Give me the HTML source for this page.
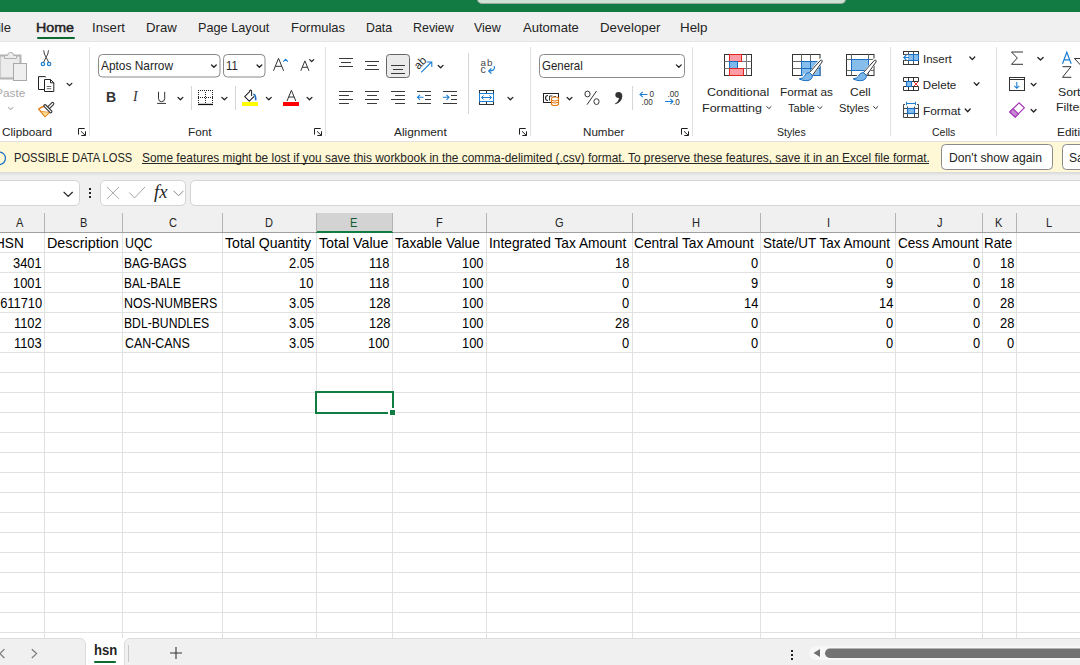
<!DOCTYPE html>
<html><head><meta charset="utf-8">
<style>
html,body{margin:0;padding:0;}
body{width:1080px;height:665px;overflow:hidden;position:relative;background:#fff;font-family:'Liberation Sans',sans-serif;}
.a{position:absolute;}
.t{position:absolute;white-space:nowrap;transform-origin:0 0;}
svg{position:absolute;overflow:visible;}
</style></head><body>
<!-- title bar -->
<div class="a" style="left:0;top:0;width:1080px;height:12px;background:#117b43"></div>
<div class="a" style="left:477px;top:-12px;width:367px;height:15px;background:#d0e2d6;border-bottom:1px solid #9aa89e;border-left:1px solid #9aa89e;border-right:1px solid #9aa89e;border-radius:0 0 5px 5px"></div>
<!-- tab bar -->
<div class="a" style="left:0;top:12px;width:1080px;height:29px;background:#f0f0f0"></div>
<div class="a" style="left:37px;top:37px;width:38px;height:2px;background:#0e6b30;border-radius:1px"></div>
<!-- ribbon -->
<div class="a" style="left:0;top:41px;width:1080px;height:100px;background:#fff;border-top:1px solid #e6e6e6"></div>
<div class="a" style="left:89px;top:47px;width:1px;height:89px;background:#e0e0e0"></div>
<div class="a" style="left:325px;top:47px;width:1px;height:89px;background:#e0e0e0"></div>
<div class="a" style="left:530px;top:47px;width:1px;height:89px;background:#e0e0e0"></div>
<div class="a" style="left:692px;top:47px;width:1px;height:89px;background:#e0e0e0"></div>
<div class="a" style="left:890px;top:47px;width:1px;height:89px;background:#e0e0e0"></div>
<div class="a" style="left:996px;top:47px;width:1px;height:89px;background:#e0e0e0"></div>
<!-- notification -->
<div class="a" style="left:0;top:141px;width:1080px;height:1px;background:#e1e1e1"></div>
<div class="a" style="left:0;top:142px;width:1080px;height:30px;background:#fff8d6"></div>
<!-- formula bar -->
<div class="a" style="left:0;top:172px;width:1080px;height:466px;background:#f0f0f0"></div>
<div class="a" style="left:0;top:172px;width:1080px;height:4px;background:linear-gradient(#d8d8d8,#f0f0f0)"></div>
<div class="a" style="left:-10px;top:180px;width:88px;height:24px;background:#fff;border:1px solid #d4d4d4;border-radius:5px"></div>
<div class="a" style="left:100px;top:180px;width:84px;height:24px;background:#fff;border:1px solid #d4d4d4;border-radius:5px"></div>
<div class="a" style="left:190px;top:180px;width:900px;height:24px;background:#fff;border:1px solid #d4d4d4;border-radius:5px"></div>
<!-- column header -->
<div class="a" style="left:316px;top:213px;width:76px;height:19px;background:#d3d3d3"></div>
<div class="a" style="left:0;top:232px;width:1080px;height:1px;background:#a0a0a0"></div>
<div class="a" style="left:316px;top:231px;width:77px;height:2px;background:#107c41"></div>
<!-- grid -->
<div class="a" style="left:0;top:233px;width:1080px;height:405px;background:#fff"></div>
<svg width="1080" height="665" style="left:0;top:0" shape-rendering="crispEdges">
<g id="vl"></g>
</svg>
<div class="a" style="left:44px;top:213px;width:1px;height:19px;background:#b4b4b4"></div>
<div class="a" style="left:44px;top:233px;width:1px;height:405px;background:#e1e1e1"></div>
<div class="a" style="left:122px;top:213px;width:1px;height:19px;background:#b4b4b4"></div>
<div class="a" style="left:122px;top:233px;width:1px;height:405px;background:#e1e1e1"></div>
<div class="a" style="left:222px;top:213px;width:1px;height:19px;background:#b4b4b4"></div>
<div class="a" style="left:222px;top:233px;width:1px;height:405px;background:#e1e1e1"></div>
<div class="a" style="left:316px;top:213px;width:1px;height:19px;background:#b4b4b4"></div>
<div class="a" style="left:316px;top:233px;width:1px;height:405px;background:#e1e1e1"></div>
<div class="a" style="left:392px;top:213px;width:1px;height:19px;background:#b4b4b4"></div>
<div class="a" style="left:392px;top:233px;width:1px;height:405px;background:#e1e1e1"></div>
<div class="a" style="left:486px;top:213px;width:1px;height:19px;background:#b4b4b4"></div>
<div class="a" style="left:486px;top:233px;width:1px;height:405px;background:#e1e1e1"></div>
<div class="a" style="left:632px;top:213px;width:1px;height:19px;background:#b4b4b4"></div>
<div class="a" style="left:632px;top:233px;width:1px;height:405px;background:#e1e1e1"></div>
<div class="a" style="left:760px;top:213px;width:1px;height:19px;background:#b4b4b4"></div>
<div class="a" style="left:760px;top:233px;width:1px;height:405px;background:#e1e1e1"></div>
<div class="a" style="left:895px;top:213px;width:1px;height:19px;background:#b4b4b4"></div>
<div class="a" style="left:895px;top:233px;width:1px;height:405px;background:#e1e1e1"></div>
<div class="a" style="left:982px;top:213px;width:1px;height:19px;background:#b4b4b4"></div>
<div class="a" style="left:982px;top:233px;width:1px;height:405px;background:#e1e1e1"></div>
<div class="a" style="left:1016px;top:213px;width:1px;height:19px;background:#b4b4b4"></div>
<div class="a" style="left:1016px;top:233px;width:1px;height:405px;background:#e1e1e1"></div>
<div class="a" style="left:0;top:252px;width:1080px;height:1px;background:#e1e1e1"></div>
<div class="a" style="left:0;top:272px;width:1080px;height:1px;background:#e1e1e1"></div>
<div class="a" style="left:0;top:292px;width:1080px;height:1px;background:#e1e1e1"></div>
<div class="a" style="left:0;top:312px;width:1080px;height:1px;background:#e1e1e1"></div>
<div class="a" style="left:0;top:332px;width:1080px;height:1px;background:#e1e1e1"></div>
<div class="a" style="left:0;top:352px;width:1080px;height:1px;background:#e1e1e1"></div>
<div class="a" style="left:0;top:372px;width:1080px;height:1px;background:#e1e1e1"></div>
<div class="a" style="left:0;top:392px;width:1080px;height:1px;background:#e1e1e1"></div>
<div class="a" style="left:0;top:412px;width:1080px;height:1px;background:#e1e1e1"></div>
<div class="a" style="left:0;top:432px;width:1080px;height:1px;background:#e1e1e1"></div>
<div class="a" style="left:0;top:452px;width:1080px;height:1px;background:#e1e1e1"></div>
<div class="a" style="left:0;top:472px;width:1080px;height:1px;background:#e1e1e1"></div>
<div class="a" style="left:0;top:492px;width:1080px;height:1px;background:#e1e1e1"></div>
<div class="a" style="left:0;top:512px;width:1080px;height:1px;background:#e1e1e1"></div>
<div class="a" style="left:0;top:532px;width:1080px;height:1px;background:#e1e1e1"></div>
<div class="a" style="left:0;top:552px;width:1080px;height:1px;background:#e1e1e1"></div>
<div class="a" style="left:0;top:572px;width:1080px;height:1px;background:#e1e1e1"></div>
<div class="a" style="left:0;top:592px;width:1080px;height:1px;background:#e1e1e1"></div>
<div class="a" style="left:0;top:612px;width:1080px;height:1px;background:#e1e1e1"></div>
<div class="a" style="left:0;top:632px;width:1080px;height:1px;background:#e1e1e1"></div>
<!-- selection -->
<div class="a" style="left:315px;top:391px;width:75px;height:19px;border:2px solid #107c41"></div>
<div class="a" style="left:388px;top:408px;width:8px;height:8px;background:#fff"></div>
<div class="a" style="left:390px;top:410px;width:5px;height:5px;background:#107c41"></div>
<!-- sheet tabs -->
<div class="a" style="left:0;top:638px;width:1080px;height:27px;background:#fff"></div>
<div class="a" style="left:-10px;top:638px;width:94px;height:40px;background:#f0f0f0;border:1px solid #dcdcdc;border-radius:0 6px 0 0"></div>
<div class="a" style="left:124px;top:638px;width:1000px;height:40px;background:#f0f0f0;border:1px solid #dcdcdc;border-radius:6px 0 0 0"></div>
<div class="a" style="left:94px;top:661px;width:22px;height:2px;background:#0e6b30;border-radius:1px"></div>
<div class="a" style="left:128px;top:645px;width:1px;height:17px;background:#c8c8c8"></div>
<svg width="1080" height="665" style="left:0;top:0" viewBox="0 0 1080 665">
<!-- ===== Clipboard ===== -->
<!-- paste board -->
<rect x="-0.5" y="55.5" width="21" height="23" fill="#e6e6e6" stroke="#b4b4b4" stroke-width="2"/>
<rect x="1.5" y="57.5" width="17" height="19" fill="#ececec" stroke="none"/>
<path d="M4.5 58.5 V55.5 H7.6 A3.1 3.1 0 0 1 13.8 55.5 H16.5 V58.5 Z" fill="#ececec" stroke="#b0b0b0" stroke-width="1"/>
<rect x="13.5" y="63.5" width="13" height="17" fill="#efefef" stroke="#a9a9a9" stroke-width="1"/>
<path d="M8.35 107.35 L10.70 109.50 L13.05 107.35" fill="none" stroke="#b9b9b9" stroke-width="1.1" stroke-linecap="round" stroke-linejoin="round"/>
<!-- scissors -->
<path d="M43.7 50.3 Q43.9 54.3 46.1 57.2 L43.4 62.6 M48.5 50.3 Q48.3 54.3 46.1 57.2 L48.8 62.6" fill="none" stroke="#444" stroke-width="1"/>
<circle cx="42.9" cy="64" r="1.7" fill="none" stroke="#1d7fd3" stroke-width="1.2"/>
<circle cx="49.1" cy="64" r="1.7" fill="none" stroke="#1d7fd3" stroke-width="1.2"/>
<!-- copy -->
<path d="M44.3 89.5 H38.5 V76.6 H45.3 L45.8 77.4" fill="none" stroke="#222" stroke-width="1"/>
<path d="M44.5 79.5 H50.5 L53.8 82.8 V91.5 H44.5 Z" fill="#fff" stroke="#222" stroke-width="1" stroke-linejoin="round"/>
<path d="M50.5 79.5 V82.8 H53.8" fill="none" stroke="#222" stroke-width="1"/>
<path d="M46.8 86.5 H51.2 M46.8 88.7 H51.2" stroke="#555" stroke-width="0.9"/>
<path d="M67.15 83.35 L69.50 85.60 L71.85 83.35" fill="none" stroke="#222" stroke-width="1.3" stroke-linecap="round" stroke-linejoin="round"/>
<!-- format painter -->
<path d="M38.6 109 Q42 106.6 45.3 106 L50.6 111.3 L45 116.6 Z" fill="#fff" stroke="#e07a12" stroke-width="1.3" stroke-linejoin="round"/>
<path d="M41.5 111.3 L49 112.6 L45 116 Z" fill="#fbe08e"/>
<path d="M41.2 111.5 L49.5 112.3" stroke="#e88a2a" stroke-width="0.9"/>
<path d="M48.5 107.8 L52.6 103.7" stroke="#333" stroke-width="3.6" stroke-linecap="round"/>
<path d="M48.5 107.8 L52.6 103.7" stroke="#fff" stroke-width="1.4" stroke-linecap="round"/>
<path d="M45 105.8 L50.8 111.6" stroke="#333" stroke-width="3.4" stroke-linecap="round"/>
<path d="M45 105.8 L50.8 111.6" stroke="#fff" stroke-width="1.2" stroke-linecap="round"/>
<!-- ===== Font ===== -->
<rect x="98.5" y="54.5" width="121.5" height="22.5" rx="4" fill="#fff" stroke="#8a8a8a" stroke-width="1"/>
<path d="M211.55 64.95 L213.90 67.30 L216.25 64.95" fill="none" stroke="#222" stroke-width="1.3" stroke-linecap="round" stroke-linejoin="round"/>
<rect x="223.5" y="54.5" width="41.5" height="22.5" rx="4" fill="#fff" stroke="#8a8a8a" stroke-width="1"/>
<path d="M257.05 64.95 L259.40 67.30 L261.75 64.95" fill="none" stroke="#222" stroke-width="1.3" stroke-linecap="round" stroke-linejoin="round"/>
<!-- grow / shrink -->
<path d="M273.5 70.8 L278.5 58.3 L283.6 70.8 M275.4 66.3 H281.7" fill="none" stroke="#333" stroke-width="1"/>
<path d="M283.3 61.6 L285.6 59.3 L287.9 61.6" fill="none" stroke="#1d7fd3" stroke-width="1.1"/>
<path d="M300.8 70.8 L304.9 60.9 L309 70.8 M302.4 67.3 H307.4" fill="none" stroke="#333" stroke-width="1"/>
<path d="M309.75 59.65 L311.70 61.60 L313.65 59.65" fill="none" stroke="#222" stroke-width="1.3" stroke-linecap="round" stroke-linejoin="round"/>
<!-- U -->
<path d="M158.5 91.8 V98.4 Q158.5 101.7 161.6 101.7 Q164.7 101.7 164.7 98.4 V91.8" fill="none" stroke="#333" stroke-width="1"/>
<path d="M157.1 103.4 H166" stroke="#333" stroke-width="1"/>
<path d="M177.95 97.35 L180.40 99.80 L182.85 97.35" fill="none" stroke="#222" stroke-width="1.3" stroke-linecap="round" stroke-linejoin="round"/>
<rect x="191" y="86" width="1" height="24" fill="#d6d6d6"/>
<!-- borders -->
<g fill="#222"><rect x="198" y="90" width="1" height="1"/><rect x="198" y="97" width="1" height="1"/><rect x="200" y="90" width="1" height="1"/><rect x="200" y="97" width="1" height="1"/><rect x="202" y="90" width="1" height="1"/><rect x="202" y="97" width="1" height="1"/><rect x="204" y="90" width="1" height="1"/><rect x="204" y="97" width="1" height="1"/><rect x="206" y="90" width="1" height="1"/><rect x="206" y="97" width="1" height="1"/><rect x="208" y="90" width="1" height="1"/><rect x="208" y="97" width="1" height="1"/><rect x="210" y="90" width="1" height="1"/><rect x="210" y="97" width="1" height="1"/><rect x="212" y="90" width="1" height="1"/><rect x="212" y="97" width="1" height="1"/><rect x="198" y="92" width="1" height="1"/><rect x="198" y="94" width="1" height="1"/><rect x="198" y="96" width="1" height="1"/><rect x="198" y="98" width="1" height="1"/><rect x="198" y="100" width="1" height="1"/><rect x="198" y="102" width="1" height="1"/><rect x="205" y="92" width="1" height="1"/><rect x="205" y="94" width="1" height="1"/><rect x="205" y="96" width="1" height="1"/><rect x="205" y="98" width="1" height="1"/><rect x="205" y="100" width="1" height="1"/><rect x="205" y="102" width="1" height="1"/><rect x="212" y="92" width="1" height="1"/><rect x="212" y="94" width="1" height="1"/><rect x="212" y="96" width="1" height="1"/><rect x="212" y="98" width="1" height="1"/><rect x="212" y="100" width="1" height="1"/><rect x="212" y="102" width="1" height="1"/><rect x="205" y="98" width="1" height="1"/><rect x="205" y="96" width="1" height="1"/><rect x="204" y="97" width="1" height="1"/><rect x="206" y="97" width="1" height="1"/></g>
<rect x="198" y="103.8" width="15" height="1.3" fill="#111"/>
<path d="M221.85 97.35 L224.40 99.80 L226.95 97.35" fill="none" stroke="#222" stroke-width="1.3" stroke-linecap="round" stroke-linejoin="round"/>
<rect x="235" y="86" width="1" height="24" fill="#d6d6d6"/>
<!-- fill color -->
<path d="M251.6 96 V91.2 Q251.6 90.1 250.6 90.1 Q249.6 90.1 249.6 91.2 V91.7 L244.7 96.6 L249.3 101.1 L254.2 96.3" fill="#fff" stroke="#222" stroke-width="1.05" stroke-linejoin="round"/>
<path d="M253.2 94.3 Q255.9 94.3 255.7 100.4" fill="none" stroke="#1a6fc4" stroke-width="1.6"/>
<rect x="242" y="102" width="16" height="4" fill="#ffff00"/>
<path d="M266.35 97.35 L268.80 99.80 L271.25 97.35" fill="none" stroke="#222" stroke-width="1.3" stroke-linecap="round" stroke-linejoin="round"/>
<!-- font color -->
<path d="M287 101 L291.4 90.3 L295.8 101 M288.7 97 H294.1" fill="none" stroke="#333" stroke-width="1"/>
<rect x="283" y="102" width="16" height="4" fill="#ff0000"/>
<path d="M307.05 97.35 L309.50 99.80 L311.95 97.35" fill="none" stroke="#222" stroke-width="1.3" stroke-linecap="round" stroke-linejoin="round"/>
<!-- launchers -->
<g fill="none" stroke="#1e1e1e" stroke-width="1"><path transform="translate(0,0)" d="M78.5 134.6 V128.5 H84.7 M81 131.3 L85.3 135.4 M85.5 131.3 V135.5 H81.3"/><path transform="translate(236,0)" d="M78.5 134.6 V128.5 H84.7 M81 131.3 L85.3 135.4 M85.5 131.3 V135.5 H81.3"/><path transform="translate(441,0)" d="M78.5 134.6 V128.5 H84.7 M81 131.3 L85.3 135.4 M85.5 131.3 V135.5 H81.3"/><path transform="translate(603,0)" d="M78.5 134.6 V128.5 H84.7 M81 131.3 L85.3 135.4 M85.5 131.3 V135.5 H81.3"/></g>
<!-- ===== Alignment ===== -->
<g fill="#3a3a3a">
<rect x="339" y="58" width="14" height="1"/><rect x="341" y="62" width="10" height="1"/><rect x="339" y="66" width="14" height="1"/>
<rect x="365" y="61" width="14" height="1"/><rect x="367" y="65" width="10" height="1"/><rect x="365" y="69" width="14" height="1"/>
</g>
<rect x="386.5" y="54.5" width="23" height="23" rx="3" fill="#ebebeb" stroke="#666" stroke-width="1"/>
<g fill="#3a3a3a">
<rect x="391" y="65" width="14" height="1"/><rect x="393" y="69" width="10" height="1"/><rect x="391" y="73" width="14" height="1"/>
<!-- row2 -->
<rect x="339" y="91" width="14" height="1"/><rect x="339" y="95" width="10" height="1"/><rect x="339" y="99" width="14" height="1"/><rect x="339" y="103" width="10" height="1"/>
<rect x="365" y="91" width="14" height="1"/><rect x="367" y="95" width="10" height="1"/><rect x="365" y="99" width="14" height="1"/><rect x="367" y="103" width="10" height="1"/>
<rect x="391" y="91" width="14" height="1"/><rect x="395" y="95" width="10" height="1"/><rect x="391" y="99" width="14" height="1"/><rect x="395" y="103" width="10" height="1"/>
<rect x="417" y="91" width="14" height="1"/><rect x="425" y="95" width="6" height="1"/><rect x="425" y="99" width="6" height="1"/><rect x="417" y="103" width="14" height="1"/>
<rect x="443" y="91" width="14" height="1"/><rect x="451" y="95" width="6" height="1"/><rect x="451" y="99" width="6" height="1"/><rect x="443" y="103" width="14" height="1"/>
</g>
<path d="M423.5 97.3 H417.5 M420 94.8 L417.5 97.3 L420 99.8" fill="none" stroke="#1d7fd3" stroke-width="1.1"/>
<path d="M443 97.3 H449 M446.5 94.8 L449 97.3 L446.5 99.8" fill="none" stroke="#1d7fd3" stroke-width="1.1"/>
<!-- orientation -->
<text x="0" y="0" transform="translate(418.4,70) rotate(-45)" font-family="Liberation Sans" font-size="11.2" fill="#2a2a2a">ab</text>
<path d="M421.2 72.3 L431.5 62 M426.8 62 H431.8 V67" fill="none" stroke="#1d7fd3" stroke-width="1.1"/>
<path d="M438.15 65.35 L440.60 67.80 L443.05 65.35" fill="none" stroke="#222" stroke-width="1.3" stroke-linecap="round" stroke-linejoin="round"/>
<rect x="468" y="53" width="1" height="61" fill="#d6d6d6"/>
<!-- wrap text -->
<text x="480.6" y="65.6" font-family="Liberation Sans" font-size="9.8" fill="#444" letter-spacing="0.9">ab</text>
<text x="480.6" y="73" font-family="Liberation Sans" font-size="10.6" fill="#444">c</text>
<path d="M494.2 66.2 Q495.8 71 488.9 71 M491.4 68.4 L488.7 71 L491.4 73.6" fill="none" stroke="#1d7fd3" stroke-width="1.25"/>
<!-- merge -->
<rect x="479.5" y="90.5" width="14" height="14" fill="#fff" stroke="#333" stroke-width="1"/>
<rect x="479.5" y="93.5" width="14" height="8" fill="#fff" stroke="#1d7fd3" stroke-width="1"/>
<path d="M486.5 90.5 V93 M486.5 102 V104.5" stroke="#333" stroke-width="1"/>
<path d="M481.5 97.5 H491.5 M483.5 95.5 L481.5 97.5 L483.5 99.5 M489.5 95.5 L491.5 97.5 L489.5 99.5" fill="none" stroke="#1d7fd3" stroke-width="1"/>
<path d="M507.95 97.35 L510.40 99.80 L512.85 97.35" fill="none" stroke="#222" stroke-width="1.3" stroke-linecap="round" stroke-linejoin="round"/>

<!-- ===== Number ===== -->
<rect x="539.5" y="54.5" width="145" height="23" rx="4" fill="#fff" stroke="#8a8a8a" stroke-width="1"/>
<path d="M676.35 64.85 L678.80 67.30 L681.25 64.85" fill="none" stroke="#222" stroke-width="1.3" stroke-linecap="round" stroke-linejoin="round"/>
<!-- accounting -->
<rect x="543.5" y="93.5" width="15" height="9" fill="#fff" stroke="#222" stroke-width="1"/>
<path d="M548 95.5 Q545.5 95.5 545.5 98 Q545.5 100.5 548 100.5" fill="none" stroke="#222" stroke-width="1.1"/>
<path d="M549.5 100.5 V96 H552.5 M553.5 96.5 H556" fill="none" stroke="#222" stroke-width="0.9"/>
<path d="M551.5 98.5 Q551.5 97 555 97 Q558.5 97 558.5 98.5 V104 Q558.5 105.5 555 105.5 Q551.5 105.5 551.5 104 Z" fill="#fff" stroke="#e07a12" stroke-width="1.2"/>
<path d="M551.5 100.3 Q555 101.8 558.5 100.3 M551.5 102.3 Q555 103.8 558.5 102.3" fill="none" stroke="#e07a12" stroke-width="1"/>
<path d="M567.05 97.35 L569.50 99.80 L571.95 97.35" fill="none" stroke="#222" stroke-width="1.3" stroke-linecap="round" stroke-linejoin="round"/>
<!-- percent -->
<path d="M596.5 91 L587 104.7" stroke="#333" stroke-width="1"/>
<ellipse cx="587.5" cy="94" rx="2.6" ry="2.9" fill="none" stroke="#333" stroke-width="1"/>
<ellipse cx="596.5" cy="101.6" rx="2.6" ry="2.9" fill="none" stroke="#333" stroke-width="1"/>
<!-- comma -->
<path d="M618.5 92 Q622.5 92 622.3 96.5 Q622 102 615.5 104.3 L615 103.5 Q618.5 101.5 619 98 Q615.3 98 615.3 95 Q615.3 92 618.5 92 Z" fill="#333"/>
<rect x="632" y="86" width="1" height="24" fill="#d6d6d6"/>
<!-- inc decimal -->
<path d="M647.5 94.5 H640 M642.7 91.8 L640 94.5 L642.7 97.2" fill="none" stroke="#1d7fd3" stroke-width="1.1"/>
<text x="649.5" y="96.8" font-family="Liberation Sans" font-size="8.2" fill="#333">0</text>
<text x="641.5" y="104.8" font-family="Liberation Sans" font-size="8.2" fill="#333">.00</text>
<!-- dec decimal -->
<text x="667.5" y="96.8" font-family="Liberation Sans" font-size="8.2" fill="#333">.00</text>
<path d="M665 101.5 H673 M670.3 98.8 L673 101.5 L670.3 104.2" fill="none" stroke="#1d7fd3" stroke-width="1.1"/>
<text x="673" y="104.8" font-family="Liberation Sans" font-size="8.2" fill="#333">.0</text>

<!-- ===== Styles ===== -->
<!-- conditional formatting -->
<rect x="724.5" y="54.5" width="27" height="21" fill="#fff" stroke="#333" stroke-width="1"/>
<path d="M724.5 61.5 H751.5 M724.5 68.5 H751.5 M729.5 54.5 V75.5 M746.5 54.5 V75.5" stroke="#777" stroke-width="1"/>
<rect x="729.5" y="54.5" width="12" height="7" fill="#ff9ba4" stroke="#e0261f" stroke-width="1"/>
<rect x="729.5" y="61.5" width="8" height="7" fill="#7cb9ea" stroke="#1a6fc4" stroke-width="1"/>
<rect x="729.5" y="68.5" width="14" height="7" fill="#ff9ba4" stroke="#e0261f" stroke-width="1"/>
<!-- format as table -->
<rect x="792.5" y="54.5" width="27.5" height="21" fill="#fff" stroke="#333" stroke-width="1"/>
<path d="M792.5 61.5 H820 M792.5 68.5 H820 M801.5 54.5 V75.5 M810.5 54.5 V75.5" stroke="#666" stroke-width="1"/>
<rect x="801.5" y="61.5" width="18.5" height="14" fill="#86bdeb" stroke="#1a6fc4" stroke-width="1"/>
<path d="M801.5 68.5 H820 M810.5 61.5 V75.5" stroke="#1a6fc4" stroke-width="1"/>
<g transform="translate(0,0)">
<path d="M810.8 74.2 L821 61" stroke="#fff" stroke-width="5" stroke-linecap="round"/>
<path d="M806.5 77.5 m-4 0 a4 4 0 1 0 8 0 a4 4 0 1 0 -8 0" fill="#fff"/>
<path d="M809.4 72.6 L820.2 60.6 Q822.6 59.2 822.1 61.9 L812.4 75.5 Z" fill="#fff" stroke="#333" stroke-width="1" stroke-linejoin="round"/>
<path d="M809.4 72.6 L812.4 75.5 Q812.3 80.4 806.6 80.7 Q802.2 80.8 799.2 78.9 Q803.4 78.4 804.5 76.1 Q805.9 72.4 809.4 72.6 Z" fill="#7cb9ea" stroke="#1a6fc4" stroke-width="1" stroke-linejoin="round"/>
</g>
<!-- cell styles -->
<rect x="846.5" y="54.5" width="27.5" height="21" fill="#fff" stroke="#333" stroke-width="1"/>
<path d="M846.5 59.5 H874 M846.5 70.5 H874 M851.5 54.5 V75.5 M868.5 54.5 V75.5" stroke="#666" stroke-width="1"/>
<rect x="851.5" y="59.5" width="17" height="11" fill="#86bdeb" stroke="#1a6fc4" stroke-width="1"/>
<g transform="translate(54,0)">
<path d="M810.8 74.2 L821 61" stroke="#fff" stroke-width="5" stroke-linecap="round"/>
<path d="M806.5 77.5 m-4 0 a4 4 0 1 0 8 0 a4 4 0 1 0 -8 0" fill="#fff"/>
<path d="M809.4 72.6 L820.2 60.6 Q822.6 59.2 822.1 61.9 L812.4 75.5 Z" fill="#fff" stroke="#333" stroke-width="1" stroke-linejoin="round"/>
<path d="M809.4 72.6 L812.4 75.5 Q812.3 80.4 806.6 80.7 Q802.2 80.8 799.2 78.9 Q803.4 78.4 804.5 76.1 Q805.9 72.4 809.4 72.6 Z" fill="#7cb9ea" stroke="#1a6fc4" stroke-width="1" stroke-linejoin="round"/>
</g>
<path d="M766.5 106.3 L768.9 108.7 L771.3 106.3 M817.5 106.3 L819.9 108.7 L822.3 106.3 M873.3 106.3 L875.7 108.7 L878.1 106.3" fill="none" stroke="#333" stroke-width="1"/>

<!-- ===== Cells ===== -->
<!-- insert -->
<rect x="903.5" y="51.5" width="15" height="13" fill="#fff" stroke="#333" stroke-width="1"/>
<path d="M903.5 54.5 H918.5 M903.5 60.5 H918.5 M908.5 51.5 V64.5 M913.5 51.5 V64.5" stroke="#555" stroke-width="1"/>
<rect x="908.5" y="54.5" width="10" height="6" fill="#86bdeb" stroke="#1a6fc4" stroke-width="1"/>
<path d="M913.5 54.5 V60.5" stroke="#1a6fc4" stroke-width="1"/>
<rect x="902.5" y="55" width="6" height="5" fill="#fff"/>
<path d="M909 57.5 H903.8 M906.3 55 L903.8 57.5 L906.3 60" fill="none" stroke="#1d7fd3" stroke-width="1.1"/>
<path d="M969.85 56.95 L972.30 59.60 L974.75 56.95" fill="none" stroke="#222" stroke-width="1.3" stroke-linecap="round" stroke-linejoin="round"/>
<!-- delete -->
<path d="M903.5 81.5 V77.5 H918.5 V81.5 H903.5 M908.5 77.5 V81.5 M913.5 77.5 V81.5 M903.5 86.5 V90.5 H918.5 V86.5 H903.5 M908.5 86.5 V90.5 M913.5 86.5 V90.5" fill="none" stroke="#333" stroke-width="1"/>
<rect x="906.5" y="81.5" width="5" height="5" fill="#86bdeb" stroke="#1a6fc4" stroke-width="1.1"/>
<path d="M913.8 81.8 L918.2 86.2 M918.2 81.8 L913.8 86.2" stroke="#e8383d" stroke-width="1"/>
<path d="M974.15 82.65 L976.60 85.30 L979.05 82.65" fill="none" stroke="#222" stroke-width="1.3" stroke-linecap="round" stroke-linejoin="round"/>
<!-- format -->
<path d="M905 104.5 H903.5 V117.5 H918.5 V104.5 H917 M903.5 108.5 H918.5 M903.5 113.5 H918.5 M907.5 106.5 V117.5 M914.5 106.5 V117.5" fill="none" stroke="#444" stroke-width="1"/>
<rect x="907.5" y="108.5" width="7" height="5" fill="#86bdeb" stroke="#1a6fc4" stroke-width="1.2"/>
<path d="M906.5 103.5 H915.5 M906.5 101.8 V105.2 M915.5 101.8 V105.2" fill="none" stroke="#1d7fd3" stroke-width="1"/>
<path d="M965.25 109.05 L967.70 111.70 L970.15 109.05" fill="none" stroke="#222" stroke-width="1.3" stroke-linecap="round" stroke-linejoin="round"/>
<!-- ===== Editing ===== -->
<path d="M1023 52 H1011.5 L1017.3 58 L1011.5 64.3 H1023" fill="none" stroke="#333" stroke-width="1"/>
<path d="M1037.85 57.55 L1040.50 60.00 L1043.15 57.55" fill="none" stroke="#222" stroke-width="1.3" stroke-linecap="round" stroke-linejoin="round"/>
<rect x="1009.5" y="77.5" width="15" height="13" fill="#fff" stroke="#333" stroke-width="1"/>
<path d="M1009.5 79.5 H1024.5" stroke="#333" stroke-width="1"/>
<path d="M1016.8 82 V88.3 M1014.3 85.8 L1016.8 88.3 L1019.3 85.8" fill="none" stroke="#1d7fd3" stroke-width="1.1"/>
<path d="M1031.15 83.35 L1033.60 85.80 L1036.05 83.35" fill="none" stroke="#222" stroke-width="1.3" stroke-linecap="round" stroke-linejoin="round"/>
<path d="M1009.8 112 L1019 102.8 L1024.3 107.8 L1015.2 117 Z" fill="#fff" stroke="#a83bb8" stroke-width="1.2" stroke-linejoin="round"/>
<path d="M1009.8 112 L1013 108.8 L1018.4 114 L1015.2 117 Z" fill="#c98bd3" stroke="#a83bb8" stroke-width="1.2" stroke-linejoin="round"/>
<path d="M1031.15 109.55 L1033.60 112.00 L1036.05 109.55" fill="none" stroke="#222" stroke-width="1.3" stroke-linecap="round" stroke-linejoin="round"/>
<path d="M1062.5 63.7 L1066.8 52.3 L1071.2 63.7 M1064 59.8 H1069.7" fill="none" stroke="#1d7fd3" stroke-width="1.2"/>
<path d="M1062.5 66.7 H1071 L1062.5 77.3 H1071.3" fill="none" stroke="#333" stroke-width="1"/>
<path d="M1074.5 58.5 H1088 L1081 65.5 Z" fill="#fff" stroke="#333" stroke-width="1"/>

<!-- ===== notification ===== -->
<circle cx="-0.8" cy="158.3" r="6.3" fill="none" stroke="#1a6fc4" stroke-width="1.2"/>
<rect x="941.5" y="144.5" width="111" height="25" rx="4" fill="#fff" stroke="#8a8a8a" stroke-width="1"/>
<rect x="1062.5" y="144.5" width="60" height="25" rx="4" fill="#fff" stroke="#8a8a8a" stroke-width="1"/>
<rect x="142" y="163" width="787" height="1" fill="#2a2a2a"/>

<!-- ===== formula bar ===== -->
<path d="M64 192.3 L68.2 196.4 L72.4 192.3" fill="none" stroke="#2a2a2a" stroke-width="1.25" stroke-linecap="round" stroke-linejoin="round"/>
<rect x="89" y="188" width="2" height="2" fill="#222"/><rect x="89" y="192" width="2" height="2" fill="#222"/><rect x="89" y="196" width="2" height="2" fill="#222"/>
<path d="M107 187 L119 198.8 M119 187 L107 198.8" stroke="#a8a8a8" stroke-width="1"/>
<path d="M129.3 192.5 L134.5 198 L145 187" fill="none" stroke="#a8a8a8" stroke-width="1"/>
<path d="M173.8 191 L178.5 195.8 L183.3 191" fill="none" stroke="#8a8a8a" stroke-width="1" stroke-linecap="round" stroke-linejoin="round"/>

<!-- ===== sheet tabs ===== -->
<path d="M4.4 649.2 L0 653.6 L4.4 658" fill="none" stroke="#7a7a7a" stroke-width="1.2"/>
<path d="M31.8 649.2 L36.6 653.6 L31.8 658" fill="none" stroke="#7a7a7a" stroke-width="1.2"/>

<path d="M176 647 V659 M170 653 H182" stroke="#333" stroke-width="1.1"/>
<rect x="791" y="650" width="2" height="2" fill="#222"/><rect x="791" y="654" width="2" height="2" fill="#222"/><rect x="791" y="658" width="2" height="2" fill="#222"/>
<rect x="809" y="646" width="280" height="14" rx="7" fill="#f7f7f7"/>
<path d="M820 649 V657 L813.5 653 Z" fill="#707070"/>
<rect x="825" y="648.5" width="270" height="9.5" rx="4.75" fill="#737373"/>
</svg>
<span class="t" style="left:106px;top:89.5px;font:bold 14px/14px 'Liberation Sans',sans-serif;color:#333">B</span>
<span class="t" style="left:133px;top:90px;font:italic 14px/14px 'Liberation Serif',serif;color:#333">I</span>
<span class="t" style="left:154px;top:182.6px;font:italic 18.5px/18px 'Liberation Serif',serif;color:#242424">fx</span>

<span class="t" style="left:-9.98px;top:22.06px;font:normal normal 12.4px/12.4px 'Liberation Sans',sans-serif;color:#242424;transform:scaleX(1.0500);">File</span>
<span class="t" style="left:36.45px;top:22.06px;font:normal normal 12.4px/12.4px 'Liberation Sans',sans-serif;color:#242424;transform:scaleX(1.1492);-webkit-text-stroke:0.45px #242424;">Home</span>
<span class="t" style="left:92.47px;top:22.06px;font:normal normal 12.4px/12.4px 'Liberation Sans',sans-serif;color:#242424;transform:scaleX(1.0655);">Insert</span>
<span class="t" style="left:146.44px;top:22.06px;font:normal normal 12.4px/12.4px 'Liberation Sans',sans-serif;color:#242424;transform:scaleX(1.0631);">Draw</span>
<span class="t" style="left:198.28px;top:22.06px;font:normal normal 12.4px/12.4px 'Liberation Sans',sans-serif;color:#242424;transform:scaleX(1.0248);">Page Layout</span>
<span class="t" style="left:290.96px;top:22.06px;font:normal normal 12.4px/12.4px 'Liberation Sans',sans-serif;color:#242424;transform:scaleX(1.0448);">Formulas</span>
<span class="t" style="left:366.00px;top:22.06px;font:normal normal 12.4px/12.4px 'Liberation Sans',sans-serif;color:#242424;transform:scaleX(0.9980);">Data</span>
<span class="t" style="left:413.40px;top:22.06px;font:normal normal 12.4px/12.4px 'Liberation Sans',sans-serif;color:#242424;transform:scaleX(1.0025);">Review</span>
<span class="t" style="left:474.20px;top:22.06px;font:normal normal 12.4px/12.4px 'Liberation Sans',sans-serif;color:#242424;transform:scaleX(1.0075);">View</span>
<span class="t" style="left:523.00px;top:22.06px;font:normal normal 12.4px/12.4px 'Liberation Sans',sans-serif;color:#242424;transform:scaleX(1.0514);">Automate</span>
<span class="t" style="left:600.23px;top:22.06px;font:normal normal 12.4px/12.4px 'Liberation Sans',sans-serif;color:#242424;transform:scaleX(1.0697);">Developer</span>
<span class="t" style="left:680.02px;top:22.06px;font:normal normal 12.4px/12.4px 'Liberation Sans',sans-serif;color:#242424;transform:scaleX(1.0792);">Help</span>
<span class="t" style="left:2.49px;top:126.14px;font:normal normal 11.6px/11.6px 'Liberation Sans',sans-serif;color:#242424;transform:scaleX(1.0103);">Clipboard</span>
<span class="t" style="left:187.99px;top:126.14px;font:normal normal 11.6px/11.6px 'Liberation Sans',sans-serif;color:#242424;transform:scaleX(1.0112);">Font</span>
<span class="t" style="left:394.00px;top:126.14px;font:normal normal 11.6px/11.6px 'Liberation Sans',sans-serif;color:#242424;transform:scaleX(1.0233);">Alignment</span>
<span class="t" style="left:582.70px;top:126.14px;font:normal normal 11.6px/11.6px 'Liberation Sans',sans-serif;color:#242424;transform:scaleX(1.0025);">Number</span>
<span class="t" style="left:776.85px;top:126.14px;font:normal normal 11.6px/11.6px 'Liberation Sans',sans-serif;color:#242424;transform:scaleX(0.9073);">Styles</span>
<span class="t" style="left:932.35px;top:126.14px;font:normal normal 11.6px/11.6px 'Liberation Sans',sans-serif;color:#242424;transform:scaleX(0.9040);">Cells</span>
<span class="t" style="left:1056.98px;top:126.14px;font:normal normal 11.6px/11.6px 'Liberation Sans',sans-serif;color:#242424;transform:scaleX(1.0200);">Editing</span>
<span class="t" style="left:-4.84px;top:86.64px;font:normal normal 11.6px/11.6px 'Liberation Sans',sans-serif;color:#a8a8a8;transform:scaleX(1.0200);">Paste</span>
<span class="t" style="left:706.86px;top:85.94px;font:normal normal 11.6px/11.6px 'Liberation Sans',sans-serif;color:#242424;transform:scaleX(1.0731);">Conditional</span>
<span class="t" style="left:702.42px;top:101.84px;font:normal normal 11.6px/11.6px 'Liberation Sans',sans-serif;color:#242424;transform:scaleX(1.0809);">Formatting</span>
<span class="t" style="left:779.59px;top:85.94px;font:normal normal 11.6px/11.6px 'Liberation Sans',sans-serif;color:#242424;transform:scaleX(1.0128);">Format as</span>
<span class="t" style="left:787.76px;top:101.84px;font:normal normal 11.6px/11.6px 'Liberation Sans',sans-serif;color:#242424;transform:scaleX(0.9630);">Table</span>
<span class="t" style="left:849.88px;top:85.94px;font:normal normal 11.6px/11.6px 'Liberation Sans',sans-serif;color:#242424;transform:scaleX(1.0347);">Cell</span>
<span class="t" style="left:838.52px;top:101.84px;font:normal normal 11.6px/11.6px 'Liberation Sans',sans-serif;color:#242424;transform:scaleX(0.9593);">Styles</span>
<span class="t" style="left:922.81px;top:53.14px;font:normal normal 11.6px/11.6px 'Liberation Sans',sans-serif;color:#242424;transform:scaleX(0.9893);">Insert</span>
<span class="t" style="left:922.80px;top:78.84px;font:normal normal 11.6px/11.6px 'Liberation Sans',sans-serif;color:#242424;transform:scaleX(1.0000);">Delete</span>
<span class="t" style="left:922.78px;top:104.54px;font:normal normal 11.6px/11.6px 'Liberation Sans',sans-serif;color:#242424;transform:scaleX(1.0238);">Format</span>
<span class="t" style="left:1058.47px;top:85.64px;font:normal normal 11.6px/11.6px 'Liberation Sans',sans-serif;color:#242424;transform:scaleX(1.0600);">Sort &amp;</span>
<span class="t" style="left:1056.34px;top:101.14px;font:normal normal 11.6px/11.6px 'Liberation Sans',sans-serif;color:#242424;transform:scaleX(1.0600);">Filter</span>
<span class="t" style="left:101.00px;top:59.63px;font:normal normal 12.2px/12.2px 'Liberation Sans',sans-serif;color:#242424;transform:scaleX(0.9763);">Aptos Narrow</span>
<span class="t" style="left:225.67px;top:59.63px;font:normal normal 12.2px/12.2px 'Liberation Sans',sans-serif;color:#242424;transform:scaleX(0.9273);">11</span>
<span class="t" style="left:542.03px;top:59.63px;font:normal normal 12.2px/12.2px 'Liberation Sans',sans-serif;color:#242424;transform:scaleX(0.9405);">General</span>
<span class="t" style="left:13.62px;top:151.79px;font:normal normal 12.6px/12.6px 'Liberation Sans',sans-serif;color:#242424;transform:scaleX(0.8832);">POSSIBLE DATA LOSS</span>
<span class="t" style="left:141.59px;top:151.79px;font:normal normal 12.6px/12.6px 'Liberation Sans',sans-serif;color:#242424;transform:scaleX(0.9438);">Some features might be lost if you save this workbook in the comma-delimited (.csv) format. To preserve these features, save it in an Excel file format.</span>
<span class="t" style="left:949.43px;top:151.79px;font:normal normal 12.6px/12.6px 'Liberation Sans',sans-serif;color:#242424;transform:scaleX(0.9666);">Don't show again</span>
<span class="t" style="left:1069.28px;top:151.79px;font:normal normal 12.6px/12.6px 'Liberation Sans',sans-serif;color:#242424;transform:scaleX(0.9600);">Save as</span>
<span class="t" style="left:16.28px;top:217.88px;font:normal normal 11.9px/11.9px 'Liberation Sans',sans-serif;color:#242424;transform:scaleX(0.9300);">A</span>
<span class="t" style="left:79.66px;top:217.88px;font:normal normal 11.9px/11.9px 'Liberation Sans',sans-serif;color:#242424;transform:scaleX(0.9300);">B</span>
<span class="t" style="left:168.55px;top:217.88px;font:normal normal 11.9px/11.9px 'Liberation Sans',sans-serif;color:#242424;transform:scaleX(0.9300);">C</span>
<span class="t" style="left:265.21px;top:217.88px;font:normal normal 11.9px/11.9px 'Liberation Sans',sans-serif;color:#242424;transform:scaleX(0.9300);">D</span>
<span class="t" style="left:350.45px;top:217.88px;font:normal normal 11.9px/11.9px 'Liberation Sans',sans-serif;color:#0e5c2f;transform:scaleX(0.9300);">E</span>
<span class="t" style="left:435.75px;top:217.88px;font:normal normal 11.9px/11.9px 'Liberation Sans',sans-serif;color:#242424;transform:scaleX(0.9300);">F</span>
<span class="t" style="left:555.02px;top:217.88px;font:normal normal 11.9px/11.9px 'Liberation Sans',sans-serif;color:#242424;transform:scaleX(0.9300);">G</span>
<span class="t" style="left:692.33px;top:217.88px;font:normal normal 11.9px/11.9px 'Liberation Sans',sans-serif;color:#242424;transform:scaleX(0.9300);">H</span>
<span class="t" style="left:826.59px;top:217.88px;font:normal normal 11.9px/11.9px 'Liberation Sans',sans-serif;color:#242424;transform:scaleX(0.9300);">I</span>
<span class="t" style="left:936.71px;top:217.88px;font:normal normal 11.9px/11.9px 'Liberation Sans',sans-serif;color:#242424;transform:scaleX(0.9300);">J</span>
<span class="t" style="left:995.48px;top:217.88px;font:normal normal 11.9px/11.9px 'Liberation Sans',sans-serif;color:#242424;transform:scaleX(0.9300);">K</span>
<span class="t" style="left:1045.83px;top:217.88px;font:normal normal 11.9px/11.9px 'Liberation Sans',sans-serif;color:#242424;transform:scaleX(0.9300);">L</span>
<span class="t" style="left:-5.19px;top:235.56px;font:normal normal 14.4px/14.4px 'Liberation Sans',sans-serif;color:#000;transform:scaleX(0.9500);">HSN</span>
<span class="t" style="left:46.95px;top:235.56px;font:normal normal 14.4px/14.4px 'Liberation Sans',sans-serif;color:#000;transform:scaleX(0.9978);">Description</span>
<span class="t" style="left:124.64px;top:235.56px;font:normal normal 14.4px/14.4px 'Liberation Sans',sans-serif;color:#000;transform:scaleX(0.8595);">UQC</span>
<span class="t" style="left:224.96px;top:235.56px;font:normal normal 14.4px/14.4px 'Liberation Sans',sans-serif;color:#000;transform:scaleX(0.9789);">Total Quantity</span>
<span class="t" style="left:318.75px;top:235.56px;font:normal normal 14.4px/14.4px 'Liberation Sans',sans-serif;color:#000;transform:scaleX(0.9892);">Total Value</span>
<span class="t" style="left:395.26px;top:235.56px;font:normal normal 14.4px/14.4px 'Liberation Sans',sans-serif;color:#000;transform:scaleX(0.9492);">Taxable Value</span>
<span class="t" style="left:488.51px;top:235.56px;font:normal normal 14.4px/14.4px 'Liberation Sans',sans-serif;color:#000;transform:scaleX(0.9551);">Integrated Tax Amount</span>
<span class="t" style="left:634.28px;top:235.56px;font:normal normal 14.4px/14.4px 'Liberation Sans',sans-serif;color:#000;transform:scaleX(0.9558);">Central Tax Amount</span>
<span class="t" style="left:762.80px;top:235.56px;font:normal normal 14.4px/14.4px 'Liberation Sans',sans-serif;color:#000;transform:scaleX(0.9368);">State/UT Tax Amount</span>
<span class="t" style="left:897.79px;top:235.56px;font:normal normal 14.4px/14.4px 'Liberation Sans',sans-serif;color:#000;transform:scaleX(0.9440);">Cess Amount</span>
<span class="t" style="left:984.34px;top:235.56px;font:normal normal 14.4px/14.4px 'Liberation Sans',sans-serif;color:#000;transform:scaleX(0.9298);">Rate</span>
<span class="t" style="left:13.43px;top:255.56px;font:normal normal 14.4px/14.4px 'Liberation Sans',sans-serif;color:#000;transform:scaleX(0.8950);">3401</span>
<span class="t" style="left:124.26px;top:255.56px;font:normal normal 14.4px/14.4px 'Liberation Sans',sans-serif;color:#000;transform:scaleX(0.8328);">BAG-BAGS</span>
<span class="t" style="left:288.59px;top:255.56px;font:normal normal 14.4px/14.4px 'Liberation Sans',sans-serif;color:#000;transform:scaleX(0.8950);">2.05</span>
<span class="t" style="left:369.49px;top:255.56px;font:normal normal 14.4px/14.4px 'Liberation Sans',sans-serif;color:#000;transform:scaleX(0.8950);">118</span>
<span class="t" style="left:462.07px;top:255.56px;font:normal normal 14.4px/14.4px 'Liberation Sans',sans-serif;color:#000;transform:scaleX(0.8950);">100</span>
<span class="t" style="left:615.45px;top:255.56px;font:normal normal 14.4px/14.4px 'Liberation Sans',sans-serif;color:#000;transform:scaleX(0.8950);">18</span>
<span class="t" style="left:750.79px;top:255.56px;font:normal normal 14.4px/14.4px 'Liberation Sans',sans-serif;color:#000;transform:scaleX(0.8950);">0</span>
<span class="t" style="left:885.79px;top:255.56px;font:normal normal 14.4px/14.4px 'Liberation Sans',sans-serif;color:#000;transform:scaleX(0.8950);">0</span>
<span class="t" style="left:972.89px;top:255.56px;font:normal normal 14.4px/14.4px 'Liberation Sans',sans-serif;color:#000;transform:scaleX(0.8950);">0</span>
<span class="t" style="left:999.65px;top:255.56px;font:normal normal 14.4px/14.4px 'Liberation Sans',sans-serif;color:#000;transform:scaleX(0.8950);">18</span>
<span class="t" style="left:13.43px;top:275.56px;font:normal normal 14.4px/14.4px 'Liberation Sans',sans-serif;color:#000;transform:scaleX(0.8950);">1001</span>
<span class="t" style="left:124.27px;top:275.56px;font:normal normal 14.4px/14.4px 'Liberation Sans',sans-serif;color:#000;transform:scaleX(0.8239);">BAL-BALE</span>
<span class="t" style="left:299.33px;top:275.56px;font:normal normal 14.4px/14.4px 'Liberation Sans',sans-serif;color:#000;transform:scaleX(0.8950);">10</span>
<span class="t" style="left:369.49px;top:275.56px;font:normal normal 14.4px/14.4px 'Liberation Sans',sans-serif;color:#000;transform:scaleX(0.8950);">118</span>
<span class="t" style="left:462.07px;top:275.56px;font:normal normal 14.4px/14.4px 'Liberation Sans',sans-serif;color:#000;transform:scaleX(0.8950);">100</span>
<span class="t" style="left:622.39px;top:275.56px;font:normal normal 14.4px/14.4px 'Liberation Sans',sans-serif;color:#000;transform:scaleX(0.8950);">0</span>
<span class="t" style="left:751.01px;top:275.56px;font:normal normal 14.4px/14.4px 'Liberation Sans',sans-serif;color:#000;transform:scaleX(0.8950);">9</span>
<span class="t" style="left:886.01px;top:275.56px;font:normal normal 14.4px/14.4px 'Liberation Sans',sans-serif;color:#000;transform:scaleX(0.8950);">9</span>
<span class="t" style="left:972.89px;top:275.56px;font:normal normal 14.4px/14.4px 'Liberation Sans',sans-serif;color:#000;transform:scaleX(0.8950);">0</span>
<span class="t" style="left:999.65px;top:275.56px;font:normal normal 14.4px/14.4px 'Liberation Sans',sans-serif;color:#000;transform:scaleX(0.8950);">18</span>
<span class="t" style="left:-7.15px;top:295.56px;font:normal normal 14.4px/14.4px 'Liberation Sans',sans-serif;color:#000;transform:scaleX(0.8950);">3611710</span>
<span class="t" style="left:124.22px;top:295.56px;font:normal normal 14.4px/14.4px 'Liberation Sans',sans-serif;color:#000;transform:scaleX(0.8632);">NOS-NUMBERS</span>
<span class="t" style="left:288.59px;top:295.56px;font:normal normal 14.4px/14.4px 'Liberation Sans',sans-serif;color:#000;transform:scaleX(0.8950);">3.05</span>
<span class="t" style="left:368.59px;top:295.56px;font:normal normal 14.4px/14.4px 'Liberation Sans',sans-serif;color:#000;transform:scaleX(0.8950);">128</span>
<span class="t" style="left:462.07px;top:295.56px;font:normal normal 14.4px/14.4px 'Liberation Sans',sans-serif;color:#000;transform:scaleX(0.8950);">100</span>
<span class="t" style="left:622.39px;top:295.56px;font:normal normal 14.4px/14.4px 'Liberation Sans',sans-serif;color:#000;transform:scaleX(0.8950);">0</span>
<span class="t" style="left:743.63px;top:295.56px;font:normal normal 14.4px/14.4px 'Liberation Sans',sans-serif;color:#000;transform:scaleX(0.8950);">14</span>
<span class="t" style="left:878.63px;top:295.56px;font:normal normal 14.4px/14.4px 'Liberation Sans',sans-serif;color:#000;transform:scaleX(0.8950);">14</span>
<span class="t" style="left:972.89px;top:295.56px;font:normal normal 14.4px/14.4px 'Liberation Sans',sans-serif;color:#000;transform:scaleX(0.8950);">0</span>
<span class="t" style="left:999.65px;top:295.56px;font:normal normal 14.4px/14.4px 'Liberation Sans',sans-serif;color:#000;transform:scaleX(0.8950);">28</span>
<span class="t" style="left:14.33px;top:315.56px;font:normal normal 14.4px/14.4px 'Liberation Sans',sans-serif;color:#000;transform:scaleX(0.8950);">1102</span>
<span class="t" style="left:124.24px;top:315.56px;font:normal normal 14.4px/14.4px 'Liberation Sans',sans-serif;color:#000;transform:scaleX(0.8456);">BDL-BUNDLES</span>
<span class="t" style="left:288.59px;top:315.56px;font:normal normal 14.4px/14.4px 'Liberation Sans',sans-serif;color:#000;transform:scaleX(0.8950);">3.05</span>
<span class="t" style="left:368.59px;top:315.56px;font:normal normal 14.4px/14.4px 'Liberation Sans',sans-serif;color:#000;transform:scaleX(0.8950);">128</span>
<span class="t" style="left:462.07px;top:315.56px;font:normal normal 14.4px/14.4px 'Liberation Sans',sans-serif;color:#000;transform:scaleX(0.8950);">100</span>
<span class="t" style="left:615.45px;top:315.56px;font:normal normal 14.4px/14.4px 'Liberation Sans',sans-serif;color:#000;transform:scaleX(0.8950);">28</span>
<span class="t" style="left:750.79px;top:315.56px;font:normal normal 14.4px/14.4px 'Liberation Sans',sans-serif;color:#000;transform:scaleX(0.8950);">0</span>
<span class="t" style="left:885.79px;top:315.56px;font:normal normal 14.4px/14.4px 'Liberation Sans',sans-serif;color:#000;transform:scaleX(0.8950);">0</span>
<span class="t" style="left:972.89px;top:315.56px;font:normal normal 14.4px/14.4px 'Liberation Sans',sans-serif;color:#000;transform:scaleX(0.8950);">0</span>
<span class="t" style="left:999.65px;top:315.56px;font:normal normal 14.4px/14.4px 'Liberation Sans',sans-serif;color:#000;transform:scaleX(0.8950);">28</span>
<span class="t" style="left:14.33px;top:335.56px;font:normal normal 14.4px/14.4px 'Liberation Sans',sans-serif;color:#000;transform:scaleX(0.8950);">1103</span>
<span class="t" style="left:124.65px;top:335.56px;font:normal normal 14.4px/14.4px 'Liberation Sans',sans-serif;color:#000;transform:scaleX(0.8624);">CAN-CANS</span>
<span class="t" style="left:288.59px;top:335.56px;font:normal normal 14.4px/14.4px 'Liberation Sans',sans-serif;color:#000;transform:scaleX(0.8950);">3.05</span>
<span class="t" style="left:368.37px;top:335.56px;font:normal normal 14.4px/14.4px 'Liberation Sans',sans-serif;color:#000;transform:scaleX(0.8950);">100</span>
<span class="t" style="left:462.07px;top:335.56px;font:normal normal 14.4px/14.4px 'Liberation Sans',sans-serif;color:#000;transform:scaleX(0.8950);">100</span>
<span class="t" style="left:622.39px;top:335.56px;font:normal normal 14.4px/14.4px 'Liberation Sans',sans-serif;color:#000;transform:scaleX(0.8950);">0</span>
<span class="t" style="left:750.79px;top:335.56px;font:normal normal 14.4px/14.4px 'Liberation Sans',sans-serif;color:#000;transform:scaleX(0.8950);">0</span>
<span class="t" style="left:885.79px;top:335.56px;font:normal normal 14.4px/14.4px 'Liberation Sans',sans-serif;color:#000;transform:scaleX(0.8950);">0</span>
<span class="t" style="left:972.89px;top:335.56px;font:normal normal 14.4px/14.4px 'Liberation Sans',sans-serif;color:#000;transform:scaleX(0.8950);">0</span>
<span class="t" style="left:1006.59px;top:335.56px;font:normal normal 14.4px/14.4px 'Liberation Sans',sans-serif;color:#000;transform:scaleX(0.8950);">0</span>
<span class="t" style="left:93.65px;top:644.07px;font:normal bold 13.8px/13.8px 'Liberation Sans',sans-serif;color:#242424;transform:scaleX(0.9495);">hsn</span>
</body></html>
